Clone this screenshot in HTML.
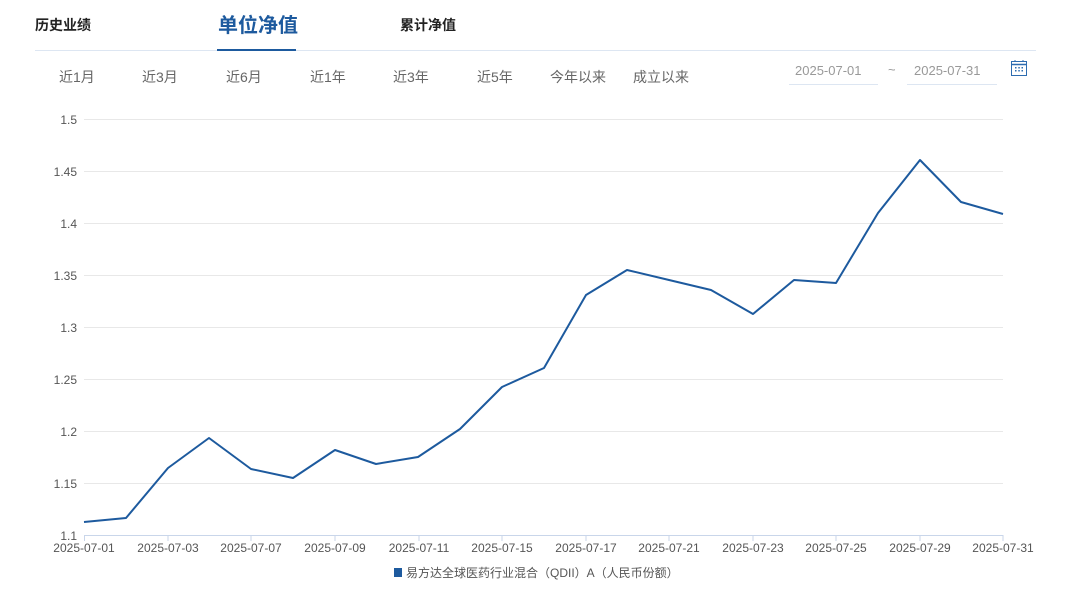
<!DOCTYPE html>
<html><head><meta charset="utf-8"><style>
body{margin:0;width:1080px;height:605px;background:#fff;font-family:"Liberation Sans","Noto Sans CJK SC",sans-serif;position:relative;overflow:hidden}
.a{position:absolute;white-space:nowrap}
.tab{font-size:14px;font-weight:bold;color:#222;top:15px}
.p{font-size:14px;color:#666;top:67px}
.d{font-size:13px;color:#999;top:63px}
</style></head><body>
<div class="a tab" style="left:35px">历史业绩</div>
<div class="a" style="left:218px;top:9px;font-size:20px;font-weight:bold;color:#1d5a9e">单位净值</div>
<div class="a tab" style="left:400px">累计净值</div>
<div class="a" style="left:35px;top:50px;width:1001px;height:1px;background:#dde6f2"></div>
<div class="a" style="left:217px;top:49px;width:79px;height:2px;background:#1d5a9e"></div>
<div class="a p" style="left:59px">近1月</div>
<div class="a p" style="left:142px">近3月</div>
<div class="a p" style="left:226px">近6月</div>
<div class="a p" style="left:310px">近1年</div>
<div class="a p" style="left:393px">近3年</div>
<div class="a p" style="left:477px">近5年</div>
<div class="a p" style="left:550px">今年以来</div>
<div class="a p" style="left:633px">成立以来</div>
<div class="a d" style="left:795px">2025-07-01</div>
<div class="a" style="left:789px;top:84px;width:89px;height:1px;background:#dde6f2"></div>
<div class="a d" style="left:888px;top:62px">~</div>
<div class="a d" style="left:914px">2025-07-31</div>
<div class="a" style="left:907px;top:84px;width:90px;height:1px;background:#dde6f2"></div>
<svg class="a" style="left:1010px;top:59px" width="18" height="18" viewBox="0 0 18 18"><rect x="1.5" y="2.5" width="15" height="14" fill="none" stroke="#2d6cb0" stroke-width="1"/><line x1="1.5" y1="5.5" x2="16.5" y2="5.5" stroke="#2d6cb0" stroke-width="1.5"/><line x1="5" y1="1" x2="5" y2="3" stroke="#2d6cb0"/><line x1="13" y1="1" x2="13" y2="3" stroke="#2d6cb0"/><g fill="#2d6cb0"><rect x="5" y="8" width="1.5" height="1.5"/><rect x="8.3" y="8" width="1.5" height="1.5"/><rect x="11.5" y="8" width="1.5" height="1.5"/><rect x="5" y="11" width="1.5" height="1.5"/><rect x="8.3" y="11" width="1.5" height="1.5"/><rect x="11.5" y="11" width="1.5" height="1.5"/></g></svg>
<svg class="a" style="left:0;top:0" width="1080" height="605">
<g stroke="#e8e8e8" stroke-width="1">
<line x1="84" x2="1003" y1="119.5" y2="119.5"/><line x1="84" x2="1003" y1="171.5" y2="171.5"/><line x1="84" x2="1003" y1="223.5" y2="223.5"/><line x1="84" x2="1003" y1="275.5" y2="275.5"/><line x1="84" x2="1003" y1="327.5" y2="327.5"/><line x1="84" x2="1003" y1="379.5" y2="379.5"/><line x1="84" x2="1003" y1="431.5" y2="431.5"/><line x1="84" x2="1003" y1="483.5" y2="483.5"/>
</g>
<line x1="84" x2="1003" y1="535.5" y2="535.5" stroke="#c9d6ea"/>
<g stroke="#c9d6ea"><line x1="84.5" x2="84.5" y1="535" y2="541"/><line x1="168" x2="168" y1="535" y2="541"/><line x1="251" x2="251" y1="535" y2="541"/><line x1="335" x2="335" y1="535" y2="541"/><line x1="419" x2="419" y1="535" y2="541"/><line x1="502" x2="502" y1="535" y2="541"/><line x1="586" x2="586" y1="535" y2="541"/><line x1="669" x2="669" y1="535" y2="541"/><line x1="753" x2="753" y1="535" y2="541"/><line x1="836" x2="836" y1="535" y2="541"/><line x1="920" x2="920" y1="535" y2="541"/><line x1="1003" x2="1003" y1="535" y2="541"/></g>
<g font-family="Liberation Sans,sans-serif" font-size="12" fill="#555" text-anchor="end">
<text x="77" y="124">1.5</text><text x="77" y="176">1.45</text><text x="77" y="228">1.4</text><text x="77" y="280">1.35</text><text x="77" y="332">1.3</text><text x="77" y="384">1.25</text><text x="77" y="436">1.2</text><text x="77" y="488">1.15</text><text x="77" y="540">1.1</text>
</g>
<g font-family="Liberation Sans,sans-serif" font-size="12" fill="#555" text-anchor="middle">
<text x="84" y="552">2025-07-01</text><text x="168" y="552">2025-07-03</text><text x="251" y="552">2025-07-07</text><text x="335" y="552">2025-07-09</text><text x="419" y="552">2025-07-11</text><text x="502" y="552">2025-07-15</text><text x="586" y="552">2025-07-17</text><text x="669" y="552">2025-07-21</text><text x="753" y="552">2025-07-23</text><text x="836" y="552">2025-07-25</text><text x="920" y="552">2025-07-29</text><text x="1003" y="552">2025-07-31</text>
</g>
<polyline fill="none" stroke="#1d5a9e" stroke-width="2" stroke-linejoin="round" points="84,522 126,518 168,468 209,438 251,469 293,478 335,450 376,464 418,457 460,429 502,387 544,368 586,295 627,270 669,280 711,290 753,314 794,280 836,283 878,213 920,160 961,202 1003,214"/>
<rect x="394" y="568" width="8" height="9" fill="#1d5a9e"/>
<text x="406" y="577" font-family="Liberation Sans,Noto Sans CJK SC,sans-serif" font-size="12" fill="#555">易方达全球医药行业混合（QDII）A（人民币份额）</text>
</svg>
</body></html>
